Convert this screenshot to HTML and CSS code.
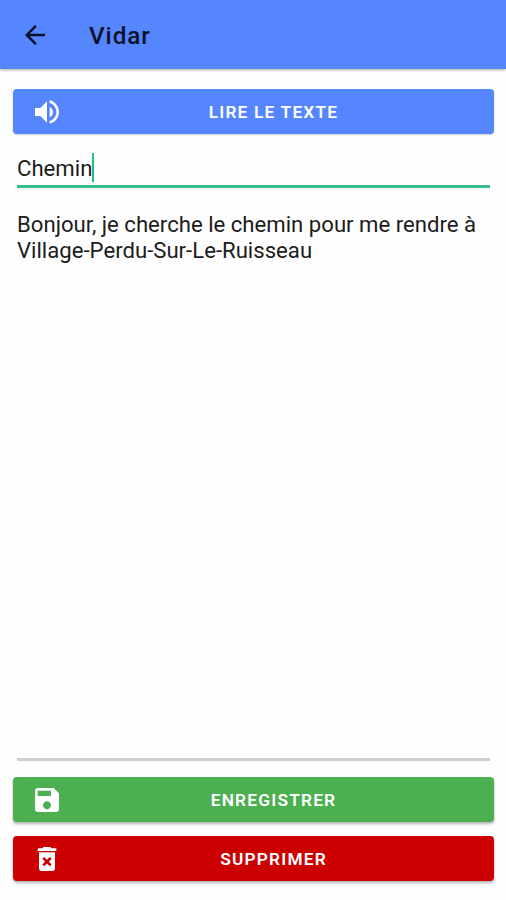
FILE: index.html
```html
<!DOCTYPE html>
<html lang="fr">
<head>
  <meta charset="UTF-8" />
  <meta name="viewport" content="width=device-width, initial-scale=1.0"/>
  <title>Vidar</title>
  <link rel="stylesheet" href="styles.css">
</head>
<body>

  <header>
    <svg class="back" viewBox="0 0 24 24"><path d="M20 11H7.83l5.59-5.59L12 4l-8 8 8 8 1.41-1.41L7.83 13H20v-2z"/></svg>
    <h1>Vidar</h1>
  </header>

  <main>
    <button class="btn read" type="button">
      <svg class="icon" viewBox="0 0 24 24"><path d="M3 9v6h4l5 5V4L7 9H3zm13.5 3c0-1.77-1.02-3.29-2.5-4.03v8.05c1.48-.73 2.5-2.25 2.5-4.02zM14 3.23v2.06c2.89.86 5 3.54 5 6.71s-2.11 5.85-5 6.71v2.06c4.01-.91 7-4.49 7-8.77s-2.99-7.86-7-8.77z"/></svg>
      <span class="label">Lire le texte</span>
    </button>

    <div class="field title-field"><span class="title-text">Chemin</span><span class="cursor"></span></div>

    <div class="field text-field">
      <span class="line">Bonjour, je cherche le chemin pour me rendre à</span>
      <span class="line">Village-Perdu-Sur-Le-Ruisseau</span>
    </div>

    <button class="btn save" type="button">
      <svg class="icon" viewBox="0 0 24 24"><path d="M17 3H5c-1.11 0-2 .9-2 2v14c0 1.1.89 2 2 2h14c1.1 0 2-.9 2-2V7l-4-4zm-5 16c-1.66 0-3-1.34-3-3s1.34-3 3-3 3 1.34 3 3-1.34 3-3 3zm3-10H5V5h10v4z"/></svg>
      <span class="label">Enregistrer</span>
    </button>

    <button class="btn delete" type="button">
      <svg class="icon" viewBox="0 0 24 24"><path d="M6 19c0 1.1.9 2 2 2h8c1.1 0 2-.9 2-2V7H6v12zm2.46-7.12l1.41-1.41L12 12.59l2.12-2.12 1.41 1.41L13.41 14l2.12 2.12-1.41 1.41L12 15.41l-2.12 2.12-1.41-1.41L10.59 14l-2.13-2.12zM15.5 4l-1-1h-5l-1 1H5v2h14V4z"/></svg>
      <span class="label">Supprimer</span>
    </button>
  </main>

</body>
</html>
```

FILE: styles.css
```css
* {
  box-sizing: border-box;
}
body {
  font-family: Roboto, "Liberation Sans", sans-serif;
  background: #fefefe;
  color: #1c1c1c;
  margin: 0;
  height: 900px;
  display: flex;
  flex-direction: column;
  overflow: hidden;
}
header {
  height: 69px;
  flex: none;
  background: #5585ff;
  display: flex;
  align-items: center;
  padding: 1px 20px 0;
  box-shadow: 0 1px 3px rgba(0,0,0,0.35);
}
.back {
  width: 30px;
  height: 30px;
  fill: #0c1326;
}
h1 {
  margin: 1px 0 0 39px;
  font-size: 24.3px;
  font-weight: 500;
  letter-spacing: 0.9px;
  color: #0c1326;
}
main {
  flex: 1;
  display: flex;
  flex-direction: column;
  padding: 20px 12px 19px 13px;
}
.btn {
  height: 45px;
  flex: none;
  display: flex;
  align-items: center;
  padding: 0 18px;
  border: none;
  border-radius: 4px;
  color: white;
  font-family: inherit;
  font-size: 17.3px;
  font-weight: 600;
  letter-spacing: 1.2px;
  text-transform: uppercase;
  box-shadow: 0 2px 3px rgba(0,0,0,0.3);
}
.icon {
  width: 32px;
  height: 32px;
  flex: none;
  fill: white;
}
.label {
  flex: 1;
  padding-left: 8px;
  text-align: center;
}
.read {
  background: #5585ff;
  box-shadow: 0 1px 2px rgba(0,0,0,0.2);
}
.save {
  background: #4caf50;
  margin-bottom: 14px;
}
.delete {
  background: #cc0000;
}
.field {
  margin: 0 4px;
  font-size: 22.15px;
  line-height: 26px;
}
.title-field {
  height: 54px;
  display: flex;
  align-items: center;
  padding-top: 16px;
  border-bottom: 3px solid #3dbb88;
}
.cursor {
  width: 2px;
  height: 29px;
  background: #1fc07c;
}
.text-field {
  flex: 1;
  padding-top: 23px;
  margin-bottom: 16px;
  border-bottom: 3px solid #cfcfcf;
}
.line {
  display: block;
  white-space: nowrap;
}
```
